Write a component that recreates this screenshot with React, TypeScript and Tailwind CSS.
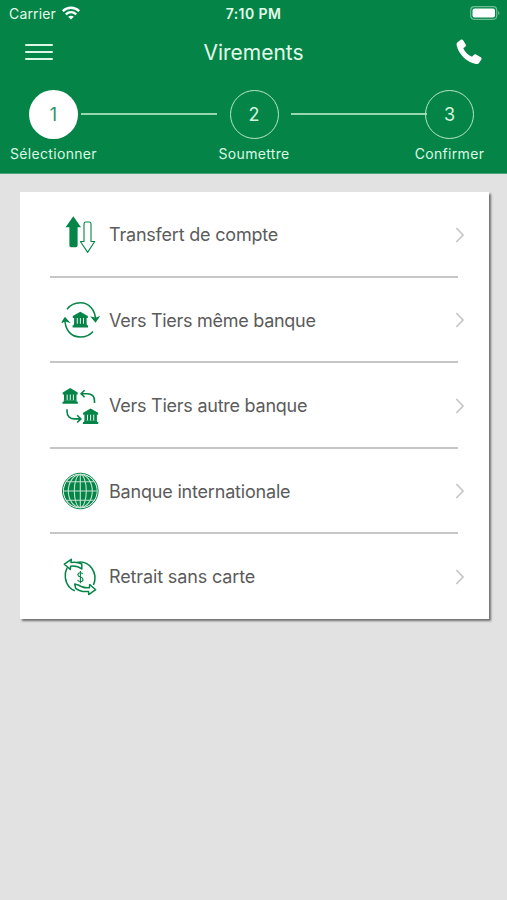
import React from 'react';

const GREEN = '#048547';

function Bank({ x, y }: { x: number; y: number }) {
  return (
    <g transform={`translate(${x} ${y})`} fill={GREEN} stroke="none">
      <path d="M7.500-.4 15 3.900v2H0v-2z" />
      <path d="M1.300 5.500h2.700v6.500H1.300zM4.900 5.500h2.200v6.500H4.900zM8 5.500h2.200v6.500H8zM11.100 5.500h2.700v6.500h-2.700z" />
      <path d="M1 11.700h13v1.500h1.200v2.100H-.2v-2.100H1z" />
    </g>
  );
}

function TransferIcon() {
  return (
    <svg viewBox="0 0 40 40" className="size-10" fill="none" stroke={GREEN}>
      <path d="M13.300 1.200 21 12.200h-3.400v18.300a1.800 1.800 0 0 1-1.800 1.800h-4.600a1.800 1.800 0 0 1-1.800-1.800V12.200H5.600z" fill={GREEN} stroke="none" />
      <path d="M24 8.800a1.800 1.800 0 0 1 1.800-1.800h3.400a1.800 1.800 0 0 1 1.800 1.800v17.700h3.700l-7.100 10.900-7.200-10.900H24z" strokeWidth="1.100" strokeLinejoin="round" />
    </svg>
  );
}

function SameBankIcon() {
  return (
    <svg viewBox="0 0 40 40" className="size-10" fill="none" stroke={GREEN} strokeWidth="1.500">
      <path d="M7 9.200C10 5.200 14.500 2.700 20.300 2.700c8.500 0 15 7 15.200 16.800" />
      <path d="M33 31.500C30 35 26 37 20.300 37 11.500 37 5 30.500 4.900 19.500" />
      <path d="m31.800 17.300 3.700 4.500 3.200-4.700-3.200 1.300z" fill={GREEN} strokeWidth="1.200" />
      <path d="m1.900 22.500 3.100-4.700 3.700 4.200-3.700-1.300z" fill={GREEN} strokeWidth="1.200" />
      <Bank x={12.800} y={12.100} />
    </svg>
  );
}

function OtherBankIcon() {
  return (
    <svg viewBox="0 0 40 40" className="size-10" fill="none" stroke={GREEN} strokeWidth="1.600">
      <Bank x={2.700} y={2.500} />
      <Bank x={23.100} y={22.800} />
      <path d="M21.500 7.700h5.800c4.500 0 7.200 2.800 7.200 7.300v2M24.600 4.200l-3.500 3.500 3.500 3.500" />
      <path d="M7 23.200v2.100c0 4.800 3 7.600 7.500 7.600h5.600M17.200 29.300l3.600 3.600-3.600 3.600" />
    </svg>
  );
}

function GlobeIcon() {
  return (
    <svg viewBox="0 0 40 40" className="size-10" fill="none">
      <circle cx="20.300" cy="20" r="17.800" stroke={GREEN} strokeWidth="1" />
      <circle cx="20.300" cy="20" r="16.500" fill={GREEN} />
      <g stroke="#c3e1d1" strokeWidth="1.100">
        <path d="M20.300 3.500v33M6.800 10.800h27M3.800 20h33M6.800 29.200h27" />
        <ellipse cx="20.300" cy="20" rx="6" ry="16.500" />
        <ellipse cx="20.300" cy="20" rx="12" ry="16.500" />
      </g>
    </svg>
  );
}

function CashIcon() {
  return (
    <svg viewBox="0 0 40 40" className="size-10" fill="none" stroke={GREEN} strokeWidth="1.500" strokeLinejoin="round">
      <path d="M7 10.800C4 17 4.800 25 9.500 30.200c1.400 1.500 3.200 2.700 5.300 3.500" />
      <path d="M17 5.400C29.500 3 38.500 16 33.500 28" />
      <path d="M11.300 2.300 4.300 7.200l6 5.200.3-3.200c4.700-.6 8 .3 11.200 2.800V7C18.500 5.200 15 4.900 11 5.500z" />
      <path d="m28.700 37.600 7-4.900-6-5.200-.3 3.200c-4.700.6-8-.3-11.200-2.800l-3.500-.8 1 4.200c3.500 2.900 8.100 3.700 12.900 3.100z" />
      <path d="M22.900 17.100c-.4-1-1.300-1.400-2.500-1.400-1.500 0-2.500.8-2.500 2 0 3 5.100 1.700 5.100 4.700 0 1.300-1.100 2.100-2.600 2.100-1.400 0-2.500-.6-2.800-1.700M20.400 14v12.300" strokeWidth="1.100" />
    </svg>
  );
}

const items = [
  { label: 'Transfert de compte', Icon: TransferIcon, tracking: 'tracking-[-0.2px]' },
  { label: 'Vers Tiers même banque', Icon: SameBankIcon, tracking: 'tracking-[-0.28px]' },
  { label: 'Vers Tiers autre banque', Icon: OtherBankIcon, tracking: 'tracking-[-0.25px]' },
  { label: 'Banque internationale', Icon: GlobeIcon, tracking: 'tracking-[-0.19px]' },
  { label: 'Retrait sans carte', Icon: CashIcon, tracking: 'tracking-[-0.13px]' },
];

function Step({ n, label, active = false }: { n: number; label: string; active?: boolean }) {
  return (
    <div className="flex w-[49px] shrink-0 flex-col items-center">
      <div
        className={
          active
            ? 'flex size-[49px] items-center justify-center rounded-full bg-white text-[18px] text-[#2f9465]'
            : 'flex size-[49px] items-center justify-center rounded-full border border-[#b5e6c8] text-[18px] text-[#d3f5df]'
        }
      >
        {n}
      </div>
      <span className="mt-[5px] text-[14px] leading-5 tracking-[0.32px] whitespace-nowrap text-[#d9f8e4]">{label}</span>
    </div>
  );
}

export default function App() {
  return (
    <div className="flex h-[900px] w-[507px] flex-col overflow-hidden bg-[#e2e2e2] font-['Inter','Liberation_Sans',sans-serif]">
      <header className="h-[174px] shrink-0 border-b border-[#4fa67c] bg-[#048547] text-[#e3fbea]">
        <div className="grid h-[27px] grid-cols-3 items-center px-[9px] text-[14px]">
          <div className="flex items-center gap-[6px]">
            <span className="tracking-[0.15px]">Carrier</span>
            <svg viewBox="0 0 18 14" className="-mt-px h-[14px] w-[18px]" fill="none" stroke="#fff" strokeWidth="2.300">
              <path d="M.8 5.100C5.500.6 12.500.6 17.200 5.100" />
              <path d="M3.800 8.300C6.900 5.500 11.100 5.500 14.200 8.300" />
              <path d="M9 13.600 6.200 10.700C7.800 9.300 10.200 9.300 11.800 10.700z" fill="#fff" stroke="none" />
            </svg>
          </div>
          <span className="text-center text-[14px] font-semibold tracking-[0.4px]">7:10 PM</span>
          <svg viewBox="0 0 30 14" className="-mr-[2px] -mt-px h-[14px] w-[30px] justify-self-end">
            <rect x=".7" y=".7" width="26" height="12.600" rx="3.500" fill="none" stroke="#6ebd94" strokeWidth="1.200" />
            <rect x="2.500" y="2.400" width="22.500" height="9.200" rx="2" fill="#fff" />
            <path d="M28.200 5c1.700.7 1.700 3.300 0 4z" fill="#6ebd94" />
          </svg>
        </div>
        <div className="grid h-[50px] grid-cols-[1fr_auto_1fr] items-center pr-[25px] pl-[25px]">
          <div className="flex w-[28px] flex-col gap-[5px]">
            <i className="h-[2px] rounded-full bg-[#dcf8e5]" />
            <i className="h-[2px] rounded-full bg-[#dcf8e5]" />
            <i className="h-[2px] rounded-full bg-[#dcf8e5]" />
          </div>
          <h1 className="pt-px text-[21px] leading-6">Virements</h1>
          <svg viewBox="0 0 26 26" className="size-[26px] justify-self-end" fill="#fff">
            <path d="M1.500 3.300 4.800.8c.8-.6 1.700-.4 2.300.4l2.600 4.300c.5.800.2 1.700-.5 2.300L7.300 9.200c1.700 3.700 4.600 6.700 8.700 8.600l1.700-1.900c.6-.7 1.500-.9 2.300-.4l4.800 2.800c.8.500 1 1.400.5 2.200l-2.100 3.300c-.7 1.100-1.900 1.500-3.200 1.200C10 22.700 2.700 15.300.7 6.500.4 5.300.6 4.100 1.500 3.300z" />
          </svg>
        </div>
        <div className="flex pt-[12.500px] pl-[29px]">
          <Step n={1} label="Sélectionner" active />
          <div className="mt-[23.500px] mr-[12.500px] ml-[3px] h-[2px] w-[136px] shrink-0 bg-[#96d7b1]" />
          <Step n={2} label="Soumettre" />
          <div className="mt-[23.500px] -mr-[2px] ml-[12.500px] h-[2px] w-[136px] shrink-0 bg-[#96d7b1]" />
          <Step n={3} label="Confirmer" />
        </div>
      </header>
      <main className="pt-[18px] pl-[20px]">
        <ul className="h-[427.400px] w-[468.500px] bg-white pr-[31px] pl-[30px] shadow-[2px_2px_2px_#707070]">
          {items.map(({ label, Icon, tracking }, i) => (
            <li
              key={label}
              className={
                'flex h-[85.500px] items-center border-b-2 pt-[2px] pl-[10px] ' +
                (i < items.length - 1 ? 'border-[#c6c6c6]' : 'border-transparent')
              }
            >
              <Icon />
              <span className={'ml-[9px] flex-1 text-[18px] text-[#5b5b5b] ' + tracking}>{label}</span>
              <svg viewBox="0 0 10 16" className="mr-[-7px] h-4 w-[10px]" fill="none" stroke="#c8c8c8" strokeWidth="1.800">
                <path d="m1.300 1 6.700 7-6.700 7" />
              </svg>
            </li>
          ))}
        </ul>
      </main>
    </div>
  );
}
